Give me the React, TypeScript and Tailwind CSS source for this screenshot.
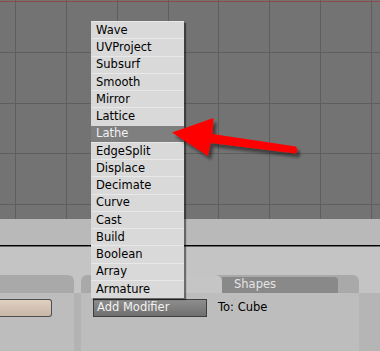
import React from 'react';

const modifiers = [
  'Wave',
  'UVProject',
  'Subsurf',
  'Smooth',
  'Mirror',
  'Lattice',
  'Lathe',
  'EdgeSplit',
  'Displace',
  'Decimate',
  'Curve',
  'Cast',
  'Build',
  'Boolean',
  'Array',
  'Armature',
];

const gridX = [15.5, 66.5, 117.5, 168.5, 218.5, 269.5, 320.5, 371.5];
const gridY = [52.5, 103.5, 153.5, 204.5];

const Viewport = () => (
  <div className="h-[219px] shrink-0 bg-[#737373]">
    <svg width="380" height="219" className="block">
      {gridX.map((x) => (
        <line key={x} x1={x} y1={0} x2={x} y2={219} stroke="#5e5e5e" strokeWidth={1} />
      ))}
      {gridY.map((y) => (
        <line key={y} x1={0} y1={y} x2={380} y2={y} stroke="#5e5e5e" strokeWidth={1} />
      ))}
      <line x1={0} y1={1.5} x2={380} y2={1.5} stroke="#8c4a4a" strokeWidth={1} />
    </svg>
  </div>
);

const ModifierMenu = () => (
  <div className="absolute left-[91px] top-[21px] w-[93px] h-[277px] bg-[#d9d9d9] shadow-[2px_2px_1px_rgba(0,0,0,0.45)]">
    {modifiers.map((name) => (
      <div
        key={name}
        className={
          name === 'Lathe'
            ? 'h-[17.25px] flex items-center pl-[5px] pt-[1px] border-t border-[#d9d9d9] bg-[#7f7f7f] text-[#f2f2f2] leading-none'
            : 'h-[17.25px] flex items-center pl-[5px] pt-[1px] border-t border-[#e8e8e8] text-black leading-none'
        }
      >
        {name}
      </div>
    ))}
  </div>
);

const Arrow = () => (
  <svg width="380" height="351" className="absolute left-0 top-0 pointer-events-none">
    <defs>
      <filter id="arrowShadow" x="-20%" y="-50%" width="140%" height="200%">
        <feDropShadow dx="3" dy="4" stdDeviation="1.6" floodColor="#000" floodOpacity="0.45" />
      </filter>
    </defs>
    <polygon
      points="172,132.5 213.5,118 212.5,134 296,146.5 297.5,150 296,153.5 210.5,143 208,156"
      fill="#ff0000"
      filter="url(#arrowShadow)"
    />
  </svg>
);

const ButtonsWindow = () => (
  <div className="flex-1 bg-[#c4c4c4] pt-[28px] flex">
    {/* left panel */}
    <div className="w-[74px] flex flex-col">
      <div className="h-[18px] bg-[#a9a9a9] rounded-tr-[6px]" />
      <div className="flex-1 bg-[#bdbdbd] pt-[6px]">
        <div className="w-[52px] h-[18px] rounded-r-[3px] border border-l-0 border-[#4e4e4e] bg-gradient-to-b from-[#e0d0c2] to-[#c8b7a7]" />
      </div>
    </div>
    <div className="w-[7px] flex flex-col">
      <div className="h-[18px]" />
      <div className="flex-1 bg-[#b3b3b3]" />
    </div>
    {/* modifiers panel */}
    <div className="w-[278px] flex flex-col">
      <div className="h-[18px] flex bg-[#a9a9a9] rounded-t-[6px]">
        <div className="w-[14px]" />
        <div className="w-[127px] bg-[#c5c5c5] rounded-tr-[7px]" />
        <div className="w-[116px] mt-[2px] bg-[#898989] rounded-tr-[4px] text-[#e4e4e4] pl-[12px] flex items-center leading-none">
          Shapes
        </div>
        <div className="flex-1" />
      </div>
      <div className="flex-1 bg-[#bdbdbd] pt-[6px] pl-[12px]">
        <div className="flex items-center">
          <div className="w-[114px] h-[18px] border border-[#3e3e3e] bg-gradient-to-b from-[#8e8e8e] to-[#6f6f6f] text-[#f2f2f2] pl-[3px] flex items-center leading-none">
            Add Modifier
          </div>
          <span className="ml-[11px] text-black leading-none">To: Cube</span>
        </div>
      </div>
    </div>
    <div className="flex-1 flex flex-col">
      <div className="h-[18px]" />
      <div className="flex-1 bg-[#b5b5b5]" />
    </div>
  </div>
);

export default function App() {
  return (
    <div className="relative w-[380px] h-[351px] overflow-hidden flex flex-col bg-[#bcbcbc] font-['DejaVu_Sans',sans-serif] text-[11.5px]">
      <Viewport />
      <div className="h-[26px] shrink-0 bg-[#b9b9b9]" />
      <div className="h-px shrink-0 bg-black" />
      <div className="h-px shrink-0 bg-[#6a6a6a]" />
      <ButtonsWindow />
      <ModifierMenu />
      <Arrow />
    </div>
  );
}
